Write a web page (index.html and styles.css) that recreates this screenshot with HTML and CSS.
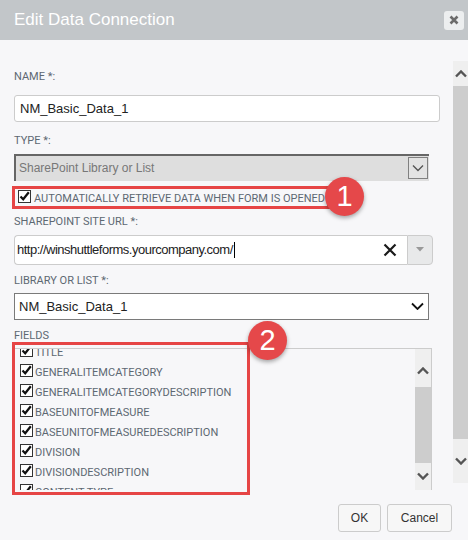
FILE: index.html
```html
<!DOCTYPE html>
<html>
<head>
<meta charset="utf-8">
<link rel="stylesheet" href="styles.css">
</head>
<body>
<div class="dialog">
  <div class="header">
    <span class="title">Edit Data Connection</span>
    <span class="close"><svg width="10" height="10" viewBox="0 0 10 10"><path d="M1.5 1.5 L8.5 8.5 M8.5 1.5 L1.5 8.5" stroke="#6b6b6b" stroke-width="2.6"/></svg></span>
  </div>
  <div class="main">
    <div class="content">
      <div class="label lbl-name">NAME *:</div>
      <div class="input name-input">NM_Basic_Data_1</div>
      <div class="label lbl-type">TYPE *:</div>
      <div class="type-select">
        <span class="type-text">SharePoint Library or List</span>
        <span class="type-btn"><svg width="12" height="8" viewBox="0 0 12 8"><path d="M1 1.5 L6 6.5 L11 1.5" fill="none" stroke="#555" stroke-width="1.4"/></svg></span>
      </div>
      <div class="auto-row">
        <svg class="cb" width="13" height="13" viewBox="0 0 13 13"><rect x="0.5" y="0.5" width="12" height="12" fill="#fff" stroke="#333"/><path d="M2.5 6.5 L5.2 9.3 L10.8 2.2" fill="none" stroke="#111" stroke-width="2.2"/></svg>
        <span class="auto-text">AUTOMATICALLY RETRIEVE DATA WHEN FORM IS OPENED</span>
      </div>
      <div class="label lbl-url">SHAREPOINT SITE URL *:</div>
      <div class="url-group">
        <div class="url-input">
          <span class="url-text">http://winshuttleforms.yourcompany.com/</span><span class="caret"></span>
          <svg class="clear" width="14" height="14" viewBox="0 0 14 14"><path d="M1.5 1.5 L12.5 12.5 M12.5 1.5 L1.5 12.5" stroke="#1a1a1a" stroke-width="2.2"/></svg>
        </div>
        <div class="url-btn"><svg width="8" height="5" viewBox="0 0 8 5"><path d="M0 0 L8 0 L4 4.5 Z" fill="#999"/></svg></div>
      </div>
      <div class="label lbl-lib">LIBRARY OR LIST *:</div>
      <div class="lib-select">
        <span class="lib-text">NM_Basic_Data_1</span>
        <svg width="13" height="8" viewBox="0 0 13 8"><path d="M1 1.5 L6.5 7 L12 1.5" fill="none" stroke="#111" stroke-width="1.8"/></svg>
      </div>
      <div class="label lbl-fields">FIELDS</div>
      <div class="fields">
        <div class="field-list">
          <div class="field"><svg class="cb" width="13" height="13" viewBox="0 0 13 13"><rect x="0.5" y="0.5" width="12" height="12" fill="#fff" stroke="#333"/><path d="M2.5 6.5 L5.2 9.3 L10.8 2.2" fill="none" stroke="#111" stroke-width="2.2"/></svg><span>TITLE</span></div>
          <div class="field"><svg class="cb" width="13" height="13" viewBox="0 0 13 13"><rect x="0.5" y="0.5" width="12" height="12" fill="#fff" stroke="#333"/><path d="M2.5 6.5 L5.2 9.3 L10.8 2.2" fill="none" stroke="#111" stroke-width="2.2"/></svg><span>GENERALITEMCATEGORY</span></div>
          <div class="field"><svg class="cb" width="13" height="13" viewBox="0 0 13 13"><rect x="0.5" y="0.5" width="12" height="12" fill="#fff" stroke="#333"/><path d="M2.5 6.5 L5.2 9.3 L10.8 2.2" fill="none" stroke="#111" stroke-width="2.2"/></svg><span>GENERALITEMCATEGORYDESCRIPTION</span></div>
          <div class="field"><svg class="cb" width="13" height="13" viewBox="0 0 13 13"><rect x="0.5" y="0.5" width="12" height="12" fill="#fff" stroke="#333"/><path d="M2.5 6.5 L5.2 9.3 L10.8 2.2" fill="none" stroke="#111" stroke-width="2.2"/></svg><span>BASEUNITOFMEASURE</span></div>
          <div class="field"><svg class="cb" width="13" height="13" viewBox="0 0 13 13"><rect x="0.5" y="0.5" width="12" height="12" fill="#fff" stroke="#333"/><path d="M2.5 6.5 L5.2 9.3 L10.8 2.2" fill="none" stroke="#111" stroke-width="2.2"/></svg><span>BASEUNITOFMEASUREDESCRIPTION</span></div>
          <div class="field"><svg class="cb" width="13" height="13" viewBox="0 0 13 13"><rect x="0.5" y="0.5" width="12" height="12" fill="#fff" stroke="#333"/><path d="M2.5 6.5 L5.2 9.3 L10.8 2.2" fill="none" stroke="#111" stroke-width="2.2"/></svg><span>DIVISION</span></div>
          <div class="field"><svg class="cb" width="13" height="13" viewBox="0 0 13 13"><rect x="0.5" y="0.5" width="12" height="12" fill="#fff" stroke="#333"/><path d="M2.5 6.5 L5.2 9.3 L10.8 2.2" fill="none" stroke="#111" stroke-width="2.2"/></svg><span>DIVISIONDESCRIPTION</span></div>
          <div class="field"><svg class="cb" width="13" height="13" viewBox="0 0 13 13"><rect x="0.5" y="0.5" width="12" height="12" fill="#fff" stroke="#333"/><path d="M2.5 6.5 L5.2 9.3 L10.8 2.2" fill="none" stroke="#111" stroke-width="2.2"/></svg><span>CONTENT TYPE</span></div>
        </div>
        <div class="inner-scroll">
          <div class="sb-up"><svg width="12" height="8" viewBox="0 0 12 8"><path d="M1 6.5 L6 1.5 L11 6.5" fill="none" stroke="#555" stroke-width="2.4"/></svg></div>
          <div class="sb-thumb"></div>
          <div class="sb-down"><svg width="12" height="8" viewBox="0 0 12 8"><path d="M1 1.5 L6 6.5 L11 1.5" fill="none" stroke="#555" stroke-width="2.4"/></svg></div>
        </div>
      </div>
    </div>
    <div class="outer-scroll">
      <div class="osb-up"><svg width="12" height="8" viewBox="0 0 12 8"><path d="M1 6.5 L6 1.5 L11 6.5" fill="none" stroke="#555" stroke-width="2.4"/></svg></div>
      <div class="osb-thumb"></div>
      <div class="osb-down"><svg width="12" height="8" viewBox="0 0 12 8"><path d="M1 1.5 L6 6.5 L11 1.5" fill="none" stroke="#555" stroke-width="2.4"/></svg></div>
    </div>
  </div>
  <div class="footer">
    <button class="btn btn-ok">OK</button>
    <button class="btn btn-cancel">Cancel</button>
  </div>
  <div class="redbox redbox-fields"></div>
  <div class="badge badge-1">1</div>
  <div class="badge badge-2">2</div>
</div>
</body>
</html>
```

FILE: styles.css
```css
* { box-sizing: border-box; }
html, body { margin: 0; padding: 0; }
body {
  font-family: "Liberation Sans", Arial, sans-serif;
  background: #f7f7f9;
}
.dialog {
  position: relative;
  width: 468px;
  height: 540px;
  overflow: hidden;
  display: flex;
  flex-direction: column;
  background: #f7f7f9;
}
.header {
  height: 40px;
  flex: none;
  background: #c2c6c9;
  display: flex;
  align-items: center;
  justify-content: space-between;
  padding: 0 4px 0 14px;
}
.title {
  color: #ffffff;
  font-size: 17px;
  line-height: 20px;
}
.close {
  width: 20px;
  height: 19px;
  background: #eceeef;
  border-radius: 3px;
  display: flex;
  align-items: center;
  justify-content: center;
}
.main {
  height: 450px;
  flex: none;
  display: flex;
}
.content {
  width: 453px;
  padding: 30px 0 0 14px;
  display: flex;
  flex-direction: column;
  align-items: flex-start;
}
.label {
  font-family: Roboto, "Liberation Sans", sans-serif;
  font-size: 11px;
  line-height: 14px;
  color: #5d6872;
}
.lbl-name { margin-bottom: 11px; }
.lbl-type { margin-bottom: 6px; }
.lbl-url { margin-bottom: 6px; }
.lbl-lib { margin-bottom: 5px; }
.lbl-fields { margin-bottom: 5px; }
.input {
  background: #fff;
  border: 1px solid #cccccc;
  border-radius: 3px;
}
.name-input {
  width: 426px;
  height: 27px;
  padding: 0 0 0 5px;
  display: flex;
  align-items: center;
  font-size: 13px;
  color: #222;
  margin-bottom: 12px;
}
.type-select {
  width: 415px;
  height: 27px;
  background: #dedede;
  border-top: 2px solid #666;
  border-left: 2px solid #666;
  display: flex;
  align-items: center;
  justify-content: space-between;
  padding: 0 1px 0 3px;
  margin-bottom: 5px;
}
.type-text {
  font-size: 12px;
  color: #777777;
}
.type-btn {
  width: 20px;
  height: 22px;
  border: 1px solid #808080;
  background: #e3e3e3;
  display: flex;
  align-items: center;
  justify-content: center;
}
.auto-row {
  height: 23px;
  margin-left: -2px;
  border: 3px solid #e64545;
  display: flex;
  align-items: center;
  padding: 0 2px 0 3px;
  margin-bottom: 6px;
}
.auto-row .cb { margin-right: 3px; margin-top: -1px; }
.auto-text {
  font-family: Roboto, "Liberation Sans", sans-serif;
  font-size: 11px;
  color: #5d6872;
  padding-top: 2px;
}
.url-group {
  display: flex;
  height: 30px;
  width: 419px;
  margin-bottom: 9px;
}
.url-input {
  flex: 1;
  background: #fff;
  border: 1px solid #cccccc;
  border-right: none;
  border-radius: 4px 0 0 4px;
  display: flex;
  align-items: center;
  padding: 0 10px 0 2px;
  font-size: 13px;
  color: #222;
}
.url-text { letter-spacing: -0.5px; }
.caret {
  width: 1px;
  height: 16px;
  background: #000;
  margin-left: 1px;
}
.clear { margin-left: auto; }
.url-btn {
  width: 26px;
  background: #e8e9ea;
  border: 1px solid #cccccc;
  border-radius: 0 4px 4px 0;
  display: flex;
  align-items: center;
  justify-content: center;
}
.lib-select {
  width: 415px;
  height: 27px;
  background: #fff;
  border: 1px solid #7a7a7a;
  display: flex;
  align-items: center;
  justify-content: space-between;
  padding: 0 4px 0 4px;
  margin-bottom: 9px;
}
.lib-text { font-size: 13px; color: #222; }
.fields {
  width: 418px;
  height: 143px;
  border-top: 1px solid #cccccc;
  border-right: 1px solid #cccccc;
  border-left: 1px solid #cccccc;
  display: flex;
  overflow: hidden;
}
.field-list {
  flex: 1;
  margin-top: -7px;
  padding-left: 5px;
}
.field {
  height: 20px;
  display: flex;
  align-items: center;
  font-family: Roboto, "Liberation Sans", sans-serif;
  font-size: 11px;
  color: #5d6872;
}
.field .cb { margin-right: 2px; margin-top: -3px; }
.field span { padding-top: 2px; }
.inner-scroll {
  width: 16px;
  background: #efefef;
  display: flex;
  flex-direction: column;
}
.sb-up { height: 39px; display: flex; align-items: center; justify-content: center; padding-top: 6px; }
.sb-thumb { height: 77px; background: #cdcdcd; }
.sb-down { height: 27px; display: flex; align-items: flex-start; justify-content: center; padding-top: 9px; }
.outer-scroll {
  width: 15px;
  margin-top: 21px;
  height: 422px;
  background: #efefef;
  display: flex;
  flex-direction: column;
}
.osb-up { height: 25px; display: flex; align-items: center; justify-content: center; }
.osb-thumb { height: 353px; background: #cdcdcd; }
.osb-down { flex: 1; display: flex; align-items: center; justify-content: center; }
.footer {
  flex: 1;
  display: flex;
  justify-content: flex-end;
  align-items: flex-start;
  padding: 14px 16px 0 0;
  gap: 6px;
}
.btn {
  font-family: "Liberation Sans", Arial, sans-serif;
  font-size: 12px;
  color: #333;
  height: 28px;
  background: #f7f7f7;
  border: 1px solid #cccccc;
  border-radius: 3px;
  padding: 0;
}
.btn-ok { width: 43px; }
.btn-cancel { width: 65px; }
.redbox {
  position: absolute;
  border: 3px solid #e64545;
}
.redbox-fields {
  left: 12px;
  top: 342px;
  width: 238px;
  height: 153px;
}
.badge {
  position: absolute;
  width: 39px;
  height: 39px;
  border-radius: 50%;
  background: #e5484a;
  box-shadow: 0 2px 4px rgba(0,0,0,0.35);
  color: #fff;
  font-family: "Liberation Sans", Arial, sans-serif;
  font-size: 29px;
  line-height: 39px;
  text-align: center;
}
.badge-1 { left: 325px; top: 177px; }
.badge-2 { left: 248px; top: 321px; }
```
